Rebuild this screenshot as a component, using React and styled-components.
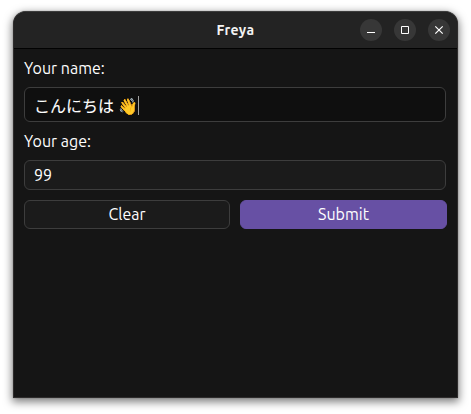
import React from "react";
import styled, { createGlobalStyle } from "styled-components";

const GlobalStyle = createGlobalStyle`
  * { box-sizing: border-box; }
  body { margin: 0; background: #fff; }
`;

const Desktop = styled.div`
  width: 471px;
  height: 414px;
  padding: 11px 13px 16px;
  overflow: hidden;
  background: #fff;
  font-family: Ubuntu, "Noto Sans", "Noto Sans CJK JP", sans-serif;
`;

const Window = styled.main`
  display: flex;
  flex-direction: column;
  width: 445px;
  height: 387px;
  overflow: hidden;
  background: #151515;
  border: 1px solid #2e2c2c;
  border-top-color: #3c3c3c;
  border-radius: 13px 13px 0 0;
  box-shadow: 0 3px 9px 1px rgba(0, 0, 0, 0.5), 0 0 1px rgba(0, 0, 0, 0.5);
`;

const TitleBar = styled.header`
  display: grid;
  grid-template-columns: 1fr auto 1fr;
  align-items: center;
  flex: none;
  height: 37px;
  padding: 0 7px;
  background: #232323;
  border-bottom: 1px solid #020202;
`;

const Title = styled.h1`
  grid-column: 2;
  margin: 0;
  color: #f4f4f4;
  font-size: 14px;
  font-weight: 700;
  line-height: 20px;
  letter-spacing: 0.35px;
`;

const Controls = styled.div`
  display: flex;
  justify-content: flex-end;
  gap: 12px;
`;

const ControlButton = styled.button`
  width: 22px;
  height: 22px;
  padding: 0;
  border: 0;
  border-radius: 50%;
  background: #373737;
  svg { display: block; }
`;

const Form = styled.form`
  display: flex;
  flex-direction: column;
  padding: 9px 10px 0;
  color: #fff;
  font-size: 16px;
`;

const Label = styled.label`
  height: 20px;
  line-height: 20px;
  margin-bottom: 9px;
`;

const Field = styled.div`
  display: flex;
  align-items: center;
  width: 422px;
  height: ${(p) => (p.$focused ? 35 : 30)}px;
  margin-bottom: ${(p) => (p.$focused ? 9 : 10)}px;
  padding: 0 9px;
  background: ${(p) => (p.$focused ? "#0f0f0f" : "#1b1b1b")};
  border: 1px solid #3d3d3d;
  border-radius: 6px;
  line-height: 20px;
  white-space: pre;
`;

const Greeting = styled.span`
  padding-top: 2px;
  -webkit-text-stroke: 0.1px #fff;
`;

const Caret = styled.span`
  width: 1px;
  height: 19px;
  margin-top: 2px;
  background: #a0a0a0;
`;

const Actions = styled.div`
  display: grid;
  grid-template-columns: 206px 207px;
  gap: 10px;
`;

const Button = styled.button`
  height: 29px;
  padding: 0 0 2px;
  border: 1px solid ${(p) => (p.$primary ? "#6750a4" : "#3d3d3d")};
  border-radius: 6px;
  background: ${(p) => (p.$primary ? "#6750a4" : "#1b1b1b")};
  color: #fff;
  font: inherit;
  line-height: 20px;
`;

const Glyph = ({ children }) => (
  <svg width="22" height="22" viewBox="0 0 22 22" fill="none" stroke="#fff">
    {children}
  </svg>
);

export default function App() {
  return (
    <>
      <GlobalStyle />
      <Desktop>
        <Window>
          <TitleBar>
            <Title>Freya</Title>
            <Controls>
              <ControlButton type="button" aria-label="Minimize">
                <Glyph><path d="M7 13.5h8" /></Glyph>
              </ControlButton>
              <ControlButton type="button" aria-label="Maximize">
                <Glyph><path d="M7.5 7.5h7v7h-7z" /></Glyph>
              </ControlButton>
              <ControlButton type="button" aria-label="Close">
                <Glyph><path d="M7.3 7.3l7.4 7.4M14.7 7.3l-7.4 7.4" strokeWidth="1.2" /></Glyph>
              </ControlButton>
            </Controls>
          </TitleBar>
          <Form>
            <Label>Your name:</Label>
            <Field $focused>
              <Greeting>こんにちは 👋</Greeting>
              <Caret />
            </Field>
            <Label>Your age:</Label>
            <Field>99</Field>
            <Actions>
              <Button type="button">Clear</Button>
              <Button type="button" $primary>Submit</Button>
            </Actions>
          </Form>
        </Window>
      </Desktop>
    </>
  );
}
